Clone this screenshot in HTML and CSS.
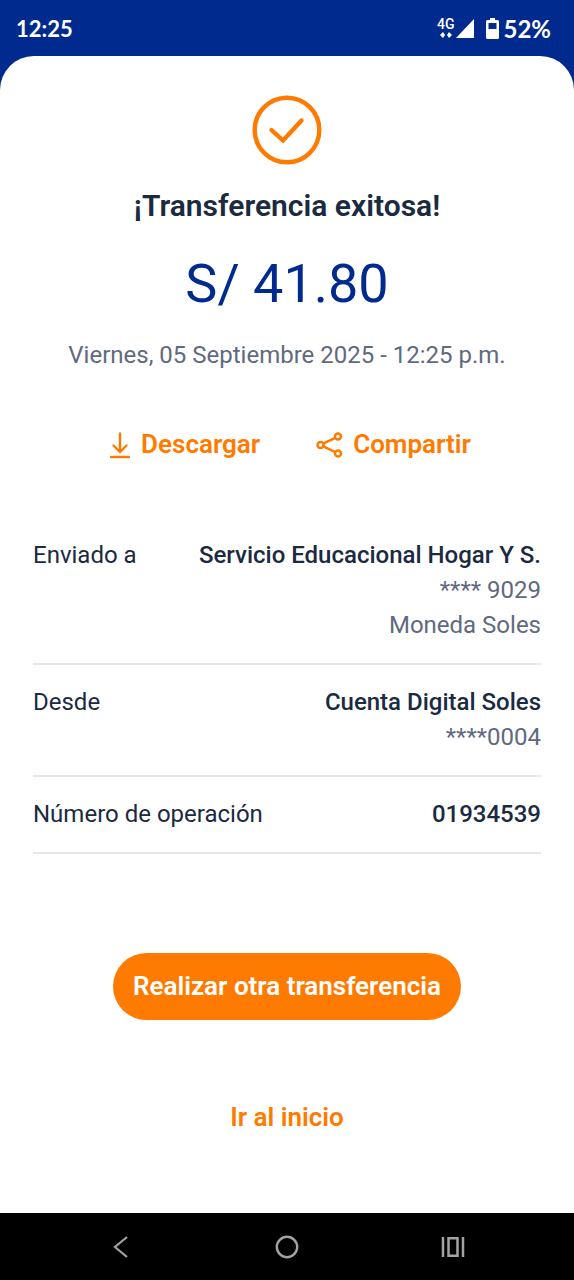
FILE: index.html
```html
<!DOCTYPE html>
<html lang="es">
<head>
<meta charset="utf-8">
<meta name="viewport" content="width=device-width, initial-scale=1">
<title>Transferencia exitosa</title>
<link rel="stylesheet" href="styles.css">
</head>
<body>
<div class="screen">
  <header class="status">
    <span class="clock">12:25</span>
    <div class="indicators">
      <div class="network">
        <span class="network-type">4G</span>
        <svg class="network-arrows" width="12" height="6" viewBox="0 0 12 6" aria-hidden="true"><path d="M0 3 3 0v6zM3 0l2 3-2 3zM7 3l2-3v6zM9 0l3 3-3 3z" fill="currentColor"/></svg>
      </div>
      <svg class="signal" width="18" height="19" viewBox="0 0 18 19" aria-hidden="true"><path d="M18 0v19H0z" fill="currentColor"/></svg>
      <svg class="battery" width="13" height="21" viewBox="0 0 13 21" aria-hidden="true"><path fill="currentColor" fill-rule="evenodd" d="M4 0h5v2h2.500q1.500 0 1.500 1.500v16q0 1.500-1.500 1.500h-10Q0 21 0 19.500v-16Q0 2 1.500 2H4zM2.500 5v6h8V5z"/></svg>
      <span class="level">52%</span>
    </div>
  </header>
  <main class="sheet">
    <svg class="success" width="70" height="70" viewBox="0 0 70 70" fill="none" stroke="currentColor" stroke-width="4.400" aria-hidden="true"><circle cx="35" cy="35" r="32.300"/><path d="m19.500 35 11.500 10.500L49.500 25.500" stroke-linecap="round"/></svg>
    <h1 class="title">¡Transferencia exitosa!</h1>
    <p class="amount">S/ 41.80</p>
    <p class="date">Viernes, 05 Septiembre 2025 - 12:25 p.m.</p>
    <div class="actions">
      <button class="action" type="button">
        <svg width="22" height="28" viewBox="0 0 22 28" fill="none" stroke="currentColor" stroke-width="2.400" stroke-linecap="round" stroke-linejoin="round" aria-hidden="true"><path d="M11 2.500V21M4.500 14.500 11 21l6.500-6.500M2 26h18"/></svg>
        Descargar
      </button>
      <button class="action" type="button">
        <svg width="27" height="28" viewBox="0 0 27 28" fill="none" stroke="currentColor" stroke-width="2.400" aria-hidden="true"><circle cx="4.500" cy="14" r="3"/><circle cx="22" cy="5.500" r="3"/><circle cx="22" cy="22.500" r="3"/><path d="M7.200 12.700 19.300 6.800M7.200 15.300l12.100 5.900"/></svg>
        Compartir
      </button>
    </div>
    <dl class="details">
      <div class="row">
        <dt class="label">Enviado a</dt>
        <dd class="values"><strong class="name">Servicio Educacional Hogar Y S.</strong><span>**** 9029</span><span>Moneda Soles</span></dd>
      </div>
      <div class="row">
        <dt class="label">Desde</dt>
        <dd class="values"><strong class="name">Cuenta Digital Soles</strong><span>****0004</span></dd>
      </div>
      <div class="row">
        <dt class="label">Número de operación</dt>
        <dd class="values"><strong class="name">01934539</strong></dd>
      </div>
    </dl>
    <button class="primary" type="button">Realizar otra transferencia</button>
    <a class="home-link" href="#">Ir al inicio</a>
  </main>
  <nav class="navbar" aria-label="Sistema">
    <button class="nav-button" type="button" aria-label="Atrás"><svg width="24" height="24" viewBox="0 0 24 24" fill="none" stroke="currentColor" stroke-width="2.200"><path d="M18 2 6 12l12 10"/></svg></button>
    <button class="nav-button" type="button" aria-label="Inicio"><svg width="24" height="24" viewBox="0 0 24 24" fill="none" stroke="currentColor" stroke-width="2.400"><circle cx="12" cy="12" r="10.200"/></svg></button>
    <button class="nav-button" type="button" aria-label="Recientes"><svg width="24" height="24" viewBox="0 0 24 24" fill="none" stroke="currentColor" stroke-width="2.500"><path d="M2 2v20M22 2v20M7.500 3.200h9v17.600h-9z"/></svg></button>
  </nav>
</div>
</body>
</html>
```
FILE: styles.css
```css
* { box-sizing: border-box; }
body {
  margin: 0;
  background: #002a8d;
  color: #1b2a41;
  font-family: Roboto, "Liberation Sans", sans-serif;
  font-size: 24px;
  line-height: 35px;
}
h1, p, dl, dd { margin: 0; }
button {
  border: 0;
  padding: 0;
  background: none;
  color: inherit;
  font: inherit;
  cursor: pointer;
}
svg { display: block; flex: none; }
.screen { display: flex; flex-direction: column; min-height: 100vh; }
.status {
  display: flex;
  justify-content: space-between;
  align-items: center;
  height: 56px;
  padding: 0 23px 0 16px;
  color: #fff;
  font-family: Lato, sans-serif;
  font-weight: 700;
}
.clock { font-size: 22px; }
.indicators { display: flex; align-items: center; }
.network { display: flex; flex-direction: column; align-items: center; gap: 2px; }
.network-type { font-family: Roboto, sans-serif; font-size: 14px; line-height: 12px; font-weight: 500; }
.signal { margin-left: 2px; }
.battery { margin: 0 4px 0 12px; }
.sheet {
  flex: 1;
  display: flex;
  flex-direction: column;
  align-items: center;
  padding: 39px 33px 76px;
  background: #fff;
  border-radius: 34px 34px 0 0;
}
.success { color: #ff7a00; }
.title { margin-top: 21px; font-size: 30px; line-height: 40px; font-weight: 600; }
.amount { margin-top: 26px; color: #002a8d; font-size: 54px; line-height: 64px; }
.date { margin-top: 22px; color: #5f6a7e; }
.actions { display: flex; gap: 56px; margin-top: 54px; padding-left: 6px; }
.action {
  display: flex;
  align-items: center;
  gap: 10px;
  color: #ff7a00;
  font-size: 26px;
  font-weight: 600;
}
.details { align-self: stretch; margin-top: 76px; }
.row {
  display: flex;
  justify-content: space-between;
  padding-bottom: 20px;
  border-bottom: 2px solid #e6e7ea;
}
.row + .row { padding-top: 20px; }
.values { display: flex; flex-direction: column; align-items: flex-end; color: #5f6a7e; }
.name { color: #1b2a41; font-weight: 500; }
.primary {
  min-height: 67px;
  margin-top: 99px;
  padding: 0 20px;
  border-radius: 34px;
  background: #ff7a00;
  color: #fff;
  font-size: 26px;
  font-weight: 600;
}
.home-link {
  margin-top: 80px;
  color: #ff7a00;
  font-size: 26px;
  font-weight: 600;
  text-decoration: none;
}
.navbar {
  display: flex;
  justify-content: center;
  align-items: center;
  gap: 142px;
  height: 67px;
  background: #000;
  color: #a3a3a3;
}
```
